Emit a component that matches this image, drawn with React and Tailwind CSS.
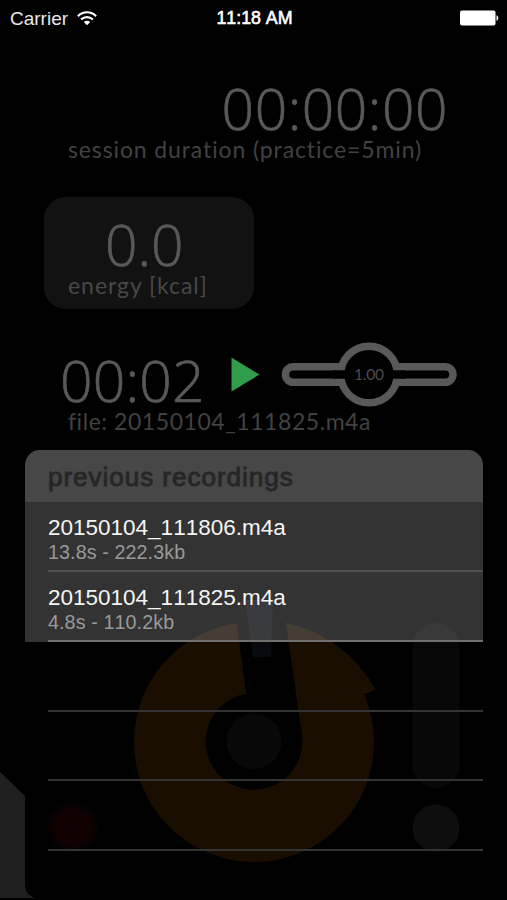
import React from 'react';

const RECORDINGS = [
  { name: '20150104_111806.m4a', length: '13.8s', size: '222.3kb' },
  { name: '20150104_111825.m4a', length: '4.8s', size: '110.2kb' },
];

const EMPTY_ROWS = [1, 2, 3];

const StatusBar = () => (
  <div className="grid h-[38px] grid-cols-3 items-center pl-[10px] pr-[8px] font-['Liberation_Sans'] font-normal text-white [font-kerning:none]">
    <div className="flex items-center gap-[9px] pb-[2px]">
      <span className="text-[19px] leading-none text-[#e8e8e8]">Carrier</span>
      <svg width="20" height="15" viewBox="0 0 20 15" fill="none" stroke="white" strokeWidth="2.1">
        <path d="M0.9 5.2C6 0 14 0 19.1 5.2" />
        <path d="M4.1 8.6C7.4 5.3 12.6 5.3 15.9 8.6" />
        <path d="M10 14.2L6.8 11C8.6 9.3 11.4 9.3 13.2 11Z" fill="white" stroke="none" />
      </svg>
    </div>
    <span className="text-center text-[17.8px] leading-none whitespace-nowrap [-webkit-text-stroke:0.6px_white]">11:18 AM</span>
    <svg className="mb-[2px] justify-self-end" width="39" height="16" viewBox="0 0 39 16" fill="white">
      <rect x="0" y="0.5" width="35.5" height="15" rx="2" />
      <path d="M36.5 5.2C38.8 6 38.8 10 36.5 10.8Z" />
    </svg>
  </div>
);

const BigNumber = ({ className, children }) => (
  <p className={`font-['Open_Sans'] text-[57px] leading-[58px] font-light [-webkit-text-stroke:0.7px_#595959] ${className}`}>
    {children}
  </p>
);

const SpeedSlider = () => (
  <svg className="mt-[3px] ml-[21px]" width="176" height="66" viewBox="0 0 176 66">
    <rect x="4.4" y="24.7" width="167.6" height="15.6" rx="7.8" fill="black" stroke="#595959" strokeWidth="7.4" />
    <circle cx="88" cy="32.5" r="28.3" fill="black" stroke="#595959" strokeWidth="7.4" />
    <rect x="52" y="28.3" width="72" height="8.4" fill="black" />
    <text x="88" y="37.5" textAnchor="middle" textLength="30" fontSize="15.5" fontFamily="Lato, sans-serif" fontWeight="400" fill="#4c4c4c">1.00</text>
  </svg>
);

// dimmed controls behind the recordings sheet
const Backdrop = () => (
  <svg className="absolute inset-0" width="507" height="900" viewBox="0 0 507 900">
    <path d="M0 772L25 796V886Q26 896 36 898H0Z" fill="#202020" />
    <circle cx="254" cy="742" r="120" fill="#190e00" />
    <path d="M285 622.5Q346 637 376 690L365 693.5L300 700Z" fill="#190e00" />
    <path d="M235 610H284L302 735L301 745L246 693Z" fill="black" />
    <circle cx="254" cy="741.5" r="48.3" fill="black" />
    <circle cx="254" cy="741.5" r="27.5" fill="#080808" />
    <path d="M245 600H273L271 657H253Z" fill="#090a10" />
    <rect x="412.5" y="623" width="47" height="165" rx="23.5" fill="#080808" />
    <circle cx="436" cy="828" r="23.5" fill="#0e0e0e" />
    <circle cx="73" cy="827" r="25" fill="#060203" />
    <circle cx="73" cy="827" r="20" fill="#100002" />
  </svg>
);

const RecordingsSheet = () => (
  <div className="absolute top-[450px] left-[25px] w-[458px] font-['Liberation_Sans'] font-normal [font-kerning:none]">
    <div className="h-[52px] rounded-t-[15px] bg-white/28 pt-[12px] pl-[23px] text-[26.2px] leading-[30px] tracking-[0.9px] text-[#262626] [-webkit-text-stroke:0.9px_#262626]">
      previous recordings
    </div>
    {RECORDINGS.map((rec, i) => (
      <div key={rec.name} className="bg-white/20 pl-[23px]">
        <div className={`h-[70px] border-b-2 pt-[13px] ${i === RECORDINGS.length - 1 ? 'border-[#707070]' : 'border-[#505050]'}`}>
          <p className="text-[22.5px] leading-[25px] text-[#f5f5f5]">{rec.name}</p>
          <p className="text-[19.7px] leading-[24px] tracking-[0.1px] text-[#999]">{rec.length} - {rec.size}</p>
        </div>
      </div>
    ))}
    {EMPTY_ROWS.map((row) => (
      <div key={row} className="ml-[23px] h-[69.7px] border-b-2 border-[#333]" />
    ))}
  </div>
);

export default function App() {
  return (
    <div className="relative h-[900px] w-[507px] overflow-hidden bg-black font-[Lato] text-[#595959] [font-variant-ligatures:none]">
      <StatusBar />

      <section className="pt-[41px]">
        <BigNumber className="pr-[59px] text-right tracking-[0.5px]">00:00:00</BigNumber>
        <p className="pl-[68px] text-[23px] leading-[24px] tracking-[0.88px] text-[#424242]">session duration (practice=5min)</p>
      </section>

      <section className="mt-[36px] ml-[44px] h-[112px] w-[210px] rounded-[22px] bg-[#121212] pt-[18px]">
        <BigNumber className="pl-[61px]">0.0</BigNumber>
        <p className="pl-[24px] text-[23px] leading-[24px] tracking-[0.95px] text-[#484848]">energy [kcal]</p>
      </section>

      <section className="mt-[30px] pl-[60px]">
        <div className="flex h-[70px] items-start">
          <BigNumber className="w-[145px] pt-[12px] tracking-[0.2px]">00:02</BigNumber>
          <svg className="mt-[18px] ml-[26px]" width="29" height="35" viewBox="0 0 29 35">
            <path d="M0.5 0.5L28.5 17.5L0.5 34.5Z" fill="#309c4c" />
          </svg>
          <SpeedSlider />
        </div>
        <p className="pl-[8px] text-[23px] leading-[24px] tracking-[0.55px] text-[#424242]">file: 20150104_111825.m4a</p>
      </section>

      <Backdrop />
      <RecordingsSheet />
    </div>
  );
}
